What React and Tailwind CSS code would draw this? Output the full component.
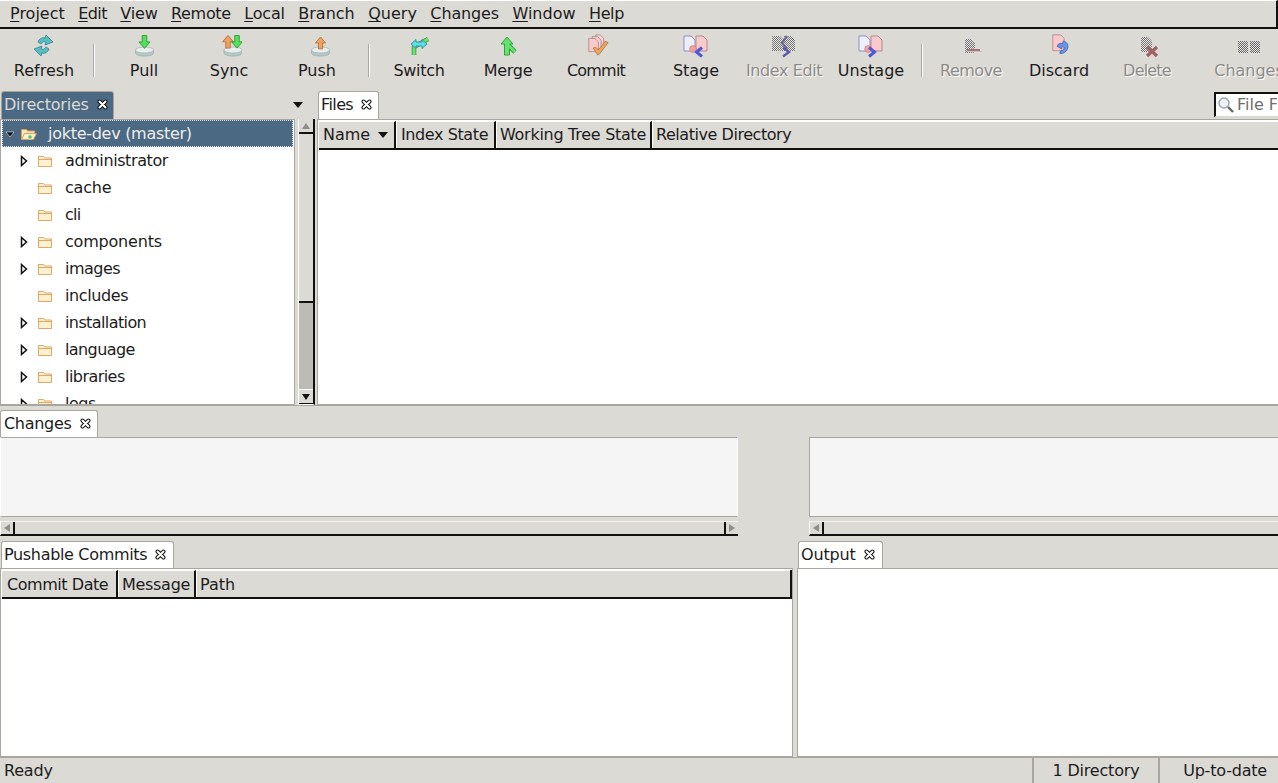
import React from "react";

const Dither = ({ id, c = "#777" }) => (
  <defs>
    <pattern id={id} width="2" height="2" patternUnits="userSpaceOnUse">
      <rect width="2" height="2" fill="#e6e5e2" />
      <rect width="1" height="1" fill={c} />
      <rect x="1" y="1" width="1" height="1" fill={c} />
    </pattern>
  </defs>
);

const Icon = ({ children, w = 26 }) => (
  <svg width={w} height="26" viewBox={`0 0 ${w} 26`} className="block shrink-0">{children}</svg>
);

const Disk = ({ cx = 13 }) => (
  <g>
    <path d={`M${cx - 9} 17v3c0 1.8 4 3 9 3s9-1.2 9-3v-3z`} fill="#b6c8c8" stroke="#9aa9a9" strokeWidth=".7" />
    <ellipse cx={cx} cy="17" rx="9" ry="3" fill="#e8eeee" stroke="#a5b4b4" strokeWidth=".7" />
  </g>
);
const UpArrow = ({ x, y, fill = "#f0a060", stroke = "#b56f38", s = 1 }) => (
  <path transform={`translate(${x} ${y}) scale(${s})`} d="M0 0l6 7H2.500v7h-5V7H-6z" fill={fill} stroke={stroke} strokeWidth="1" strokeLinejoin="round" />
);
const DownArrow = ({ x, y, fill = "#53e05a", stroke = "#2f9a38", s = 1 }) => (
  <path transform={`translate(${x} ${y}) scale(${s})`} d="M-2.500 0h5v7H6l-6 7-6-7h3.500z" fill={fill} stroke={stroke} strokeWidth="1" strokeLinejoin="round" />
);

const Doc = ({ x, y, w = 11, h = 15, fill = "#f9caca", stroke = "#b58b8b" }) => (
  <path d={`M${x} ${y}h${w - 4}l4 4v${h - 4}h-${w}z`} fill={fill} stroke={stroke} strokeWidth="1" />
);

const icons = {
  Refresh: (
    <Icon>
      <path d="M7 9c1-3 4-5 7-4l1-3 7 7-8 3 1-3c-2-1-4 0-5 2z" fill="#58bcc4" stroke="#3b8c96" strokeWidth=".9" strokeLinejoin="round" />
      <path d="M18 16c-1 3-4 5-7 4l-1 3-7-7 8-3-1 3c2 1 4 0 5-2z" fill="#58bcc4" stroke="#3b8c96" strokeWidth=".9" strokeLinejoin="round" />
    </Icon>
  ),
  Pull: (
    <Icon><Disk cx={13.5} /><DownArrow x="13.5" y="2.5" s=".92" /></Icon>
  ),
  Sync: (
    <Icon><Disk cx={17} /><UpArrow x="12" y="2.5" s=".9" /><DownArrow x="21" y="2.5" s=".9" /></Icon>
  ),
  Push: (
    <Icon><Disk cx={16.5} /><UpArrow x="16.5" y="4" s=".85" /></Icon>
  ),
  Switch: (
    <Icon>
      <path d="M8 22v-8L22 6" fill="none" stroke="#3ba444" strokeWidth="4.6" strokeLinejoin="round" />
      <path d="M8 22v-8L22 6" fill="none" stroke="#6fe06f" strokeWidth="2.8" strokeLinejoin="round" />
      <path d="M5 11l5-4.500v2.500h6V6.500l5 4.500-5 4.500V13h-6v2.500z" fill="#5fdde8" stroke="#2b8f9c" strokeWidth=".9" strokeLinejoin="round" />
    </Icon>
  ),
  Merge: (
    <Icon>
      <path d="M12 11l8 8" stroke="#33a03e" strokeWidth="4.6" />
      <path d="M12 4l6 7h-3.500v11h-5V11H6z" fill="#62e46c" stroke="#33a03e" strokeWidth="1" strokeLinejoin="round" />
      <path d="M13 12l7 7" stroke="#62e46c" strokeWidth="2.8" />
    </Icon>
  ),
  Commit: (
    <Icon w={30}>
      <g transform="translate(6 1) scale(.88)">
        <Doc x={10} y={1} w={9} h={13} fill="#f4d5d5" />
        <Doc x={6} y={3} w={10} h={14} fill="#f7cfcf" />
        <Doc x={2} y={5} w={11} h={15} />
        <path d="M7 16l4 6 1 2 2-1 10-13-3-2-8 10-3-3z" fill="#eda55c" stroke="#a66f35" strokeWidth=".8" strokeLinejoin="round" />
      </g>
    </Icon>
  ),
  Stage: (
    <Icon>
      <Doc x={1} y={3} w={11} h={15} fill="#eeeefc" stroke="#8d8fc0" />
      <Doc x={13} y={3} w={11} h={15} />
      <circle cx="10" cy="16" r="3.4" fill="#f2a0a0" stroke="#c87878" strokeWidth=".6" />
      <path d="M19 14.500l-5.500 4.500 5.500 4.500" fill="none" stroke="#5058d8" strokeWidth="3" />
    </Icon>
  ),
  "Index Edit": (
    <Icon>
      <Dither id="d1" />
      <path d="M1 3h8l4 4v11H1z" fill="url(#d1)" />
      <path d="M13 3h7l4 4v11H13z" fill="url(#d1)" />
      <path d="M16 3l-5 7 5 6" fill="none" stroke="#6e7098" strokeWidth="2.4" />
      <path d="M12 14.500l6 4.500-6 4.500" fill="none" stroke="#5a5ca8" strokeWidth="2.4" />
    </Icon>
  ),
  Unstage: (
    <Icon>
      <Doc x={1} y={3} w={11} h={15} fill="#eeeefc" stroke="#8d8fc0" />
      <Doc x={13} y={3} w={11} h={15} />
      <circle cx="10" cy="16" r="3.4" fill="#f2a0a0" stroke="#c87878" strokeWidth=".6" />
      <path d="M11 14.500l5.500 4.500-5.500 4.500" fill="none" stroke="#5058d8" strokeWidth="3" />
    </Icon>
  ),
  Remove: (
    <Icon>
      <Dither id="d2" />
      <path d="M7 6h6l4 4v10H7z" fill="url(#d2)" />
      <rect x="9" y="16" width="13" height="2" fill="#a57474" />
      <rect x="9" y="18" width="15" height="1" fill="#c4c2bd" />
    </Icon>
  ),
  Discard: (
    <Icon>
      <g transform="translate(5 1) scale(.88)">
        <Doc x={2} y={1} w={13} h={18} />
        <path d="M7 14c1-3 3-4 6-3l1-3c4 1 6 4 5 8-1 4-5 7-9 6l1-3c2 0 4-1 4-3 0-1-1-2-2-2l-1 3z" fill="#6a94e4" stroke="#3d5cb0" strokeWidth=".9" strokeLinejoin="round" />
      </g>
    </Icon>
  ),
  Delete: (
    <Icon>
      <Dither id="d3" />
      <path d="M7 4h7l4 4v11H7z" fill="url(#d3)" />
      <path d="M13 14l10 9M23 14L13 23" stroke="#a26060" strokeWidth="3.2" />
    </Icon>
  ),
  Changes: (
    <Icon>
      <Dither id="d4" c="#666" />
      <rect x="2" y="8" width="10" height="12" fill="url(#d4)" />
      <rect x="14" y="8" width="10" height="12" fill="url(#d4)" />
    </Icon>
  ),
};

const Tool = ({ label, w, off, t = "" }) => (
  <div className={`${w} shrink-0 flex flex-col items-center`}>
    <div className="h-[26px] flex items-center justify-center">{icons[label]}</div>
    <div className={`mt-[2px] h-[20px] leading-[20px] whitespace-nowrap ${t} ${off ? "text-[#8c8b88] [text-shadow:1px_1px_0_#fff]" : ""}`}>{label}</div>
  </div>
);

const Sep = ({ w }) => (
  <div className={`${w} shrink-0 flex justify-center pt-[11px]`}>
    <div className="w-[2px] h-[33px] border-l border-l-[#aaa8a2] border-r border-r-white" />
  </div>
);

const Close = () => (
  <svg width="11" height="11" viewBox="0 0 11 11" className="shrink-0">
    <path d="M2.500 2.500l6 6M8.500 2.500l-6 6" stroke="#111" strokeWidth="4" strokeLinecap="round" />
    <path d="M2.500 2.500l6 6M8.500 2.500l-6 6" stroke="#fff" strokeWidth="2" strokeLinecap="round" />
  </svg>
);

const Tab = ({ label, w, active, t = "" }) => (
  <div className={`${w} h-[28px] mt-[1px] -mb-[1px] pb-[2px] flex items-center pl-[2px] gap-[8px] rounded-t-[3px] border border-[#a8a69f] border-b-0 whitespace-nowrap ${active ? "bg-[#4b6983] text-[#dcdad5]" : "bg-white"}`}>
    <span className={t}>{label}</span>
    <Close />
  </div>
);

const Folder = ({ open }) => (
  <svg width="18" height="14" viewBox="0 0 18 14" className="shrink-0">
    {open ? (
      <>
        <path d="M1.500 12.500v-10h5l1 1.500h7v3" fill="#fbe6b4" stroke="#d79f5e" />
        <path d="M1.500 12.500l3-6h12l-3 6z" fill="#fdf0cc" stroke="#d79f5e" />
        <circle cx="10" cy="10" r="2.2" fill="#5fc06a" stroke="#e9f6e9" strokeWidth=".8" />
      </>
    ) : (
      <>
        <path d="M1.500 12.500v-10h5l1.500 1.500h6.500v8.500z" fill="#fdf1d2" stroke="#e0a766" />
        <path d="M1.500 5.500h13" stroke="#e0a766" />
      </>
    )}
  </svg>
);

const Expander = ({ down }) =>
  down ? (
    <svg width="10" height="10" viewBox="0 0 10 10" className="shrink-0"><path d="M1 3h8L5 8z" fill="#111" stroke="#fff" strokeWidth=".5" /></svg>
  ) : (
    <svg width="10" height="12" viewBox="0 0 10 12" className="shrink-0"><path d="M2.500 1.500L7.500 6l-5 4.500z" fill="#fff" stroke="#111" strokeWidth="1.5" /></svg>
  );

const rows = [
  ["administrator", 1, "tracking-[-0.4px]"],
  ["cache", 0, "tracking-[-0.2px]"],
  ["cli", 0, "tracking-[-0.8px]"],
  ["components", 1, "tracking-[-0.2px]"],
  ["images", 1, "tracking-[-0.5px]"],
  ["includes", 0, "tracking-[-0.4px]"],
  ["installation", 1, "tracking-[-0.6px]"],
  ["language", 1, "tracking-[-0.6px]"],
  ["libraries", 1, "tracking-[-0.55px]"],
  ["logs", 1, "tracking-[-0.5px]"],
];

const Header = ({ w, children, last }) => (
  <div className={`${w} h-full flex items-center whitespace-nowrap border-t border-t-white ${last ? "flex-1" : "shrink-0 border-r-2 border-r-[#111] shadow-[1px_0_0_#fff]"}`}>{children}</div>
);

const VTri = ({ d, c = "#555" }) => (
  <svg width="8" height="6" viewBox="0 0 8 6"><path d={d} fill={c} /></svg>
);
const HTri = ({ d, c = "#8f8d88" }) => (
  <svg width="6" height="8" viewBox="0 0 6 8"><path d={d} fill={c} /></svg>
);

const HScroll = ({ showEnd }) => (
  <div className="w-full h-[15px] flex border-t border-t-[#f3f2ef] border-l border-l-white border-b-2 border-b-[#111] bg-[#dcdad5]">
    <div className="w-[14px] shrink-0 flex items-center justify-center border-r-2 border-r-[#111]"><HTri d="M6 0v8L0 4z" /></div>
    <div className="flex-1" />
    {showEnd && <div className="w-[14px] shrink-0 flex items-center justify-center border-l-2 border-l-[#111]"><HTri d="M0 0v8l6-4z" /></div>}
  </div>
);

const Menu = ({ k, r, t = "" }) => (
  <span className={t}><span className="underline underline-offset-2">{k}</span>{r}</span>
);

export default function App() {
  return (
    <div className="w-[1278px] h-[783px] overflow-hidden flex flex-col bg-[#dcdad5] text-[#1c1c1c] text-[16px] font-['DejaVu_Sans',sans-serif]">
      <div className="h-[29px] shrink-0 flex items-center gap-[13.5px] pl-[10px] border-t border-t-white border-b-2 border-b-[#111] border-r-2 border-r-[#111]">
        <Menu k="P" r="roject" />
        <Menu k="E" r="dit" t="tracking-[-0.6px]" />
        <Menu k="V" r="iew" t="tracking-[-0.2px]" />
        <Menu k="R" r="emote" t="tracking-[-0.33px]" />
        <Menu k="L" r="ocal" t="tracking-[-0.2px]" />
        <Menu k="B" r="ranch" />
        <Menu k="Q" r="uery" />
        <Menu k="C" r="hanges" t="tracking-[-0.15px]" />
        <Menu k="W" r="indow" />
        <Menu k="H" r="elp" t="tracking-[-0.4px]" />
      </div>

      <div className="h-[61px] shrink-0 flex overflow-hidden pt-[4px]">
        <Tool label="Refresh" w="w-[88px]" />
        <Sep w="w-[12px]" />
        <Tool label="Pull" w="w-[88px]" />
        <Tool label="Sync" w="w-[82px]" />
        <Tool label="Push" w="w-[94px]" />
        <Sep w="w-[10px]" />
        <Tool label="Switch" w="w-[90px]" t="tracking-[-0.3px]" />
        <Tool label="Merge" w="w-[88px]" t="tracking-[-0.3px]" />
        <Tool label="Commit" w="w-[88px]" t="tracking-[-0.8px]" />
        <div className="w-[12px] shrink-0" />
        <Tool label="Stage" w="w-[88px]" />
        <Tool label="Index Edit" w="w-[88px]" off t="tracking-[-0.4px]" />
        <Tool label="Unstage" w="w-[86px]" />
        <Sep w="w-[16px]" />
        <Tool label="Remove" w="w-[82px]" off t="tracking-[-0.5px]" />
        <Tool label="Discard" w="w-[94px]" />
        <Tool label="Delete" w="w-[82px]" off t="tracking-[-0.8px]" />
        <Tool label="Changes" w="w-[122px]" off />
      </div>

      <div className="h-[315px] shrink-0 flex">
        <div className="w-[317px] shrink-0 flex flex-col pr-[1px]">
          <div className="h-[29px] shrink-0 flex pl-[1px] pr-[14px] items-center">
            <div className="self-start"><Tab label="Directories" w="w-[113px]" active t="tracking-[-0.2px]" /></div>
            <svg width="12" height="8" viewBox="0 0 12 8" className="ml-auto mr-[-2px]"><path d="M1 1h10L6 7z" fill="#111" /></svg>
          </div>
          <div className="flex-1 flex min-h-0 gap-[3px]">
            <div className="w-[295px] shrink-0 bg-white border border-[#a8a69f] overflow-hidden">
              <div className="h-[27px] mx-[1px] bg-[#4b6983] text-[#eeeeec] flex items-center border border-dotted border-white/80 pl-[2px]">
                <Expander down />
                <div className="ml-[5px]"><Folder open /></div>
                <span className="ml-[10px] tracking-[-0.28px]">jokte-dev (master)</span>
              </div>
              {rows.map(([n, e, t]) => (
                <div key={n} className="h-[27px] flex items-center pl-[18px]">
                  <div className="w-[18px] shrink-0">{e ? <Expander /> : null}</div>
                  <Folder />
                  <span className={`ml-[10px] ${t}`}>{n}</span>
                </div>
              ))}
            </div>
            <div className="w-[17px] shrink-0 flex flex-col bg-[#bdbbb5] border-l border-l-white border-r-2 border-r-[#111] border-b border-b-white">
              <div className="h-[15px] shrink-0 bg-[#dcdad5] border-b-2 border-b-[#111] flex items-center justify-center"><VTri d="M0 6h8L4 0z" c="#8f8d88" /></div>
              <div className="h-[169px] shrink-0 bg-[#dcdad5] border-b-2 border-b-[#111]" />
              <div className="flex-1" />
              <div className="h-[15px] shrink-0 bg-[#dcdad5] border-b border-t border-b-[#111] border-t-white flex items-center justify-center"><VTri d="M0 0h8L4 6z" c="#111" /></div>
            </div>
          </div>
        </div>
        <div className="flex-1 min-w-0 flex flex-col">
          <div className="h-[29px] shrink-0 flex pl-[1px]">
            <Tab label="Files" w="w-[61px]" t="tracking-[-0.6px]" />
            <div className="ml-auto mt-[2px] w-[64px] h-[25px] pb-[1px] bg-white border-l-2 border-t-2 border-l-[#111] border-t-[#111] border-b border-b-[#dcdad5] flex items-center pl-[1px] gap-[2px] whitespace-nowrap text-[#6e6e6e] overflow-hidden">
              <svg width="18" height="18" viewBox="0 0 18 18" className="shrink-0">
                <circle cx="7" cy="7" r="5" fill="#eef2f6" stroke="#9aa4ae" strokeWidth="1.4" />
                <path d="M11 11l5 5" stroke="#666" strokeWidth="2.4" />
              </svg>
              <span>File Filter</span>
            </div>
          </div>
          <div className="flex-1 min-h-0 bg-white border border-[#a8a69f] border-r-0 flex flex-col pt-[1px]">
            <div className="h-[29px] shrink-0 flex ml-[1px] bg-[#dcdad5] border-b-2 border-b-[#111]">
              <Header w="w-[77px]"><span className="pl-[4px]">Name</span><svg width="10" height="6" viewBox="0 0 10 6" className="ml-[8px]"><path d="M0 0h10L5 6z" fill="#111" /></svg></Header>
              <Header w="w-[100px]"><span className="pl-[5px] tracking-[-0.4px]">Index State</span></Header>
              <Header w="w-[156px]"><span className="pl-[4px] tracking-[-0.28px]">Working Tree State</span></Header>
              <Header last><span className="pl-[4px] tracking-[-0.45px]">Relative Directory</span></Header>
            </div>
          </div>
        </div>
      </div>

      <div className="h-[136px] shrink-0 flex flex-col">
        <div className="h-[32px] shrink-0 pt-[3px] border-t border-t-[#a8a69f]">
          <Tab label="Changes" w="w-[98px]" t="tracking-[-0.3px] ml-[1px]" />
        </div>
        <div className="flex justify-between">
          <div className="w-[738px] flex flex-col gap-[4px]">
            <div className="h-[80px] bg-[#f5f5f5] border border-[#a8a69f] border-l-white border-r-white" />
            <HScroll showEnd />
          </div>
          <div className="w-[469px] flex flex-col gap-[4px]">
            <div className="h-[80px] bg-[#f5f5f5] border border-[#a8a69f] border-r-0" />
            <HScroll />
          </div>
        </div>
      </div>

      <div className="h-[216px] shrink-0 flex gap-[4px]">
        <div className="w-[793px] shrink-0 flex flex-col">
          <div className="h-[28px] shrink-0 pl-[1px] -mt-[1px]"><Tab label="Pushable Commits" w="w-[173px]" t="tracking-[-0.33px]" /></div>
          <div className="flex-1 min-h-0 bg-white border border-[#a8a69f] pt-[1px] flex flex-col">
            <div className="h-[29px] shrink-0 flex ml-[1px] bg-[#dcdad5] border-b-2 border-b-[#111] border-r-2 border-r-[#111]">
              <Header w="w-[116px]"><span className="pl-[5px] pt-[2px] tracking-[-0.45px]">Commit Date</span></Header>
              <Header w="w-[78px]"><span className="pl-[4px] pt-[2px] tracking-[-0.3px]">Message</span></Header>
              <Header last><span className="pl-[4px] pt-[2px]">Path</span></Header>
            </div>
          </div>
        </div>
        <div className="flex-1 min-w-0 flex flex-col">
          <div className="h-[28px] shrink-0 pl-[1px] -mt-[1px]"><Tab label="Output" w="w-[85px]" t="tracking-[-0.15px]" /></div>
          <div className="flex-1 min-h-0 bg-white border border-[#a8a69f] border-r-0" />
        </div>
      </div>

      <div className="h-[26px] shrink-0 flex items-center border-t border-t-[#a8a69f]">
        <span className="pl-[4px] flex-1 tracking-[-0.2px]">Ready</span>
        <div className="w-[126px] h-full flex items-center justify-center border-l-2 border-l-[#a8a69f] tracking-[-0.2px]">1 Directory</div>
        <div className="w-[120px] h-full flex items-center justify-end pr-[11px] border-l-2 border-l-[#a8a69f] tracking-[-0.2px]">Up-to-date</div>
      </div>
    </div>
  );
}
